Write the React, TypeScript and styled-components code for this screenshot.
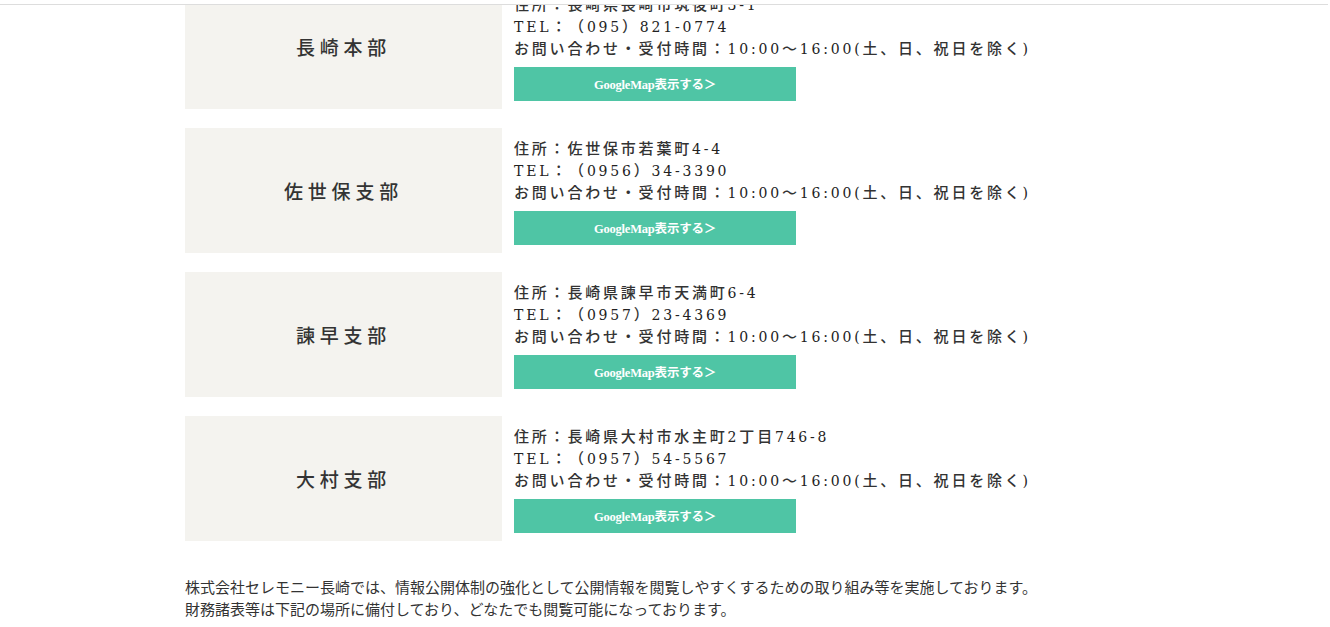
import React from 'react';
import styled, { createGlobalStyle } from 'styled-components';

const GlobalStyle = createGlobalStyle`
  html, body {
    margin: 0;
    padding: 0;
    background: #ffffff;
  }
  body {
    font-family: "Liberation Serif", "Noto Sans CJK JP", serif;
    color: #333333;
    text-spacing-trim: space-all;
  }
`;

const TopBar = styled.header`
  position: fixed;
  top: 0;
  left: 0;
  right: 2px;
  height: 4px;
  background: #ffffff;
  border-bottom: 1px solid #dddddd;
  z-index: 10;
`;

const Page = styled.div`
  height: 627px;
  overflow: hidden;
`;

const Main = styled.main`
  width: 860px;
  margin: -16px 0 0 185px;
`;

const OfficeList = styled.ul`
  list-style: none;
  margin: 0;
  padding: 0;
  display: flex;
  flex-direction: column;
  gap: 19px;
`;

const OfficeRow = styled.li`
  display: flex;
  gap: 12px;
  align-items: center;
`;

const OfficeName = styled.div`
  width: 317px;
  height: 125px;
  flex-shrink: 0;
  background: #f4f3ef;
  display: flex;
  align-items: center;
  justify-content: center;
  font-size: 19px;
  font-weight: 500;
  letter-spacing: 4.8px;
  color: #333333;
`;

const OfficeInfo = styled.div`
  display: flex;
  flex-direction: column;
  padding-top: 1px;
`;

const InfoLine = styled.p`
  margin: 0;
  font-size: 15px;
  line-height: 22px;
  letter-spacing: 2.8px;
  font-weight: 500;
  color: #333333;
  white-space: nowrap;
`;

const Latin = styled.span`
  font-family: "DejaVu Serif", "Liberation Serif", serif;
  font-size: 14px;
  font-weight: 400;
  color: #222222;
`;

const MapButton = styled.a`
  display: flex;
  align-items: center;
  justify-content: center;
  width: 282px;
  height: 34px;
  margin-top: 7px;
  background: #4fc5a5;
  color: #ffffff;
  font-size: 12.5px;
  font-weight: 700;
  letter-spacing: -0.2px;
  text-decoration: none;
`;

const Notice = styled.div`
  margin-top: 36px;
  font-size: 15px;
  line-height: 22px;
  color: #333333;
  white-space: nowrap;

  p {
    margin: 0;
  }
`;

type Office = {
  name: string;
  address: string;
  tel: string;
};

const offices: Office[] = [
  { name: '長崎本部', address: '長崎県長崎市筑後町3-1', tel: '（095）821-0774' },
  { name: '佐世保支部', address: '佐世保市若葉町4-4', tel: '（0956）34-3390' },
  { name: '諫早支部', address: '長崎県諫早市天満町6-4', tel: '（0957）23-4369' },
  { name: '大村支部', address: '長崎県大村市水主町2丁目746-8', tel: '（0957）54-5567' },
];

const withLatin = (text: string) =>
  text.split(/([!-~]+)/).map((part, i) =>
    /^[!-~]+$/.test(part) ? <Latin key={i}>{part}</Latin> : part
  );

const App: React.FC = () => {
  return (
    <>
      <GlobalStyle />
      <TopBar />
      <Page>
        <Main>
          <OfficeList>
            {offices.map((office) => (
              <OfficeRow key={office.name}>
                <OfficeName>{office.name}</OfficeName>
                <OfficeInfo>
                  <InfoLine>{withLatin(`住所：${office.address}`)}</InfoLine>
                  <InfoLine>{withLatin(`TEL：${office.tel}`)}</InfoLine>
                  <InfoLine>{withLatin('お問い合わせ・受付時間：10:00～16:00(土、日、祝日を除く)')}</InfoLine>
                  <MapButton href="#">GoogleMap表示する＞</MapButton>
                </OfficeInfo>
              </OfficeRow>
            ))}
          </OfficeList>
          <Notice>
            <p>株式会社セレモニー長崎では、情報公開体制の強化として公開情報を閲覧しやすくするための取り組み等を実施しております。</p>
            <p>財務諸表等は下記の場所に備付しており、どなたでも閲覧可能になっております。</p>
          </Notice>
        </Main>
      </Page>
    </>
  );
};

export default App;
